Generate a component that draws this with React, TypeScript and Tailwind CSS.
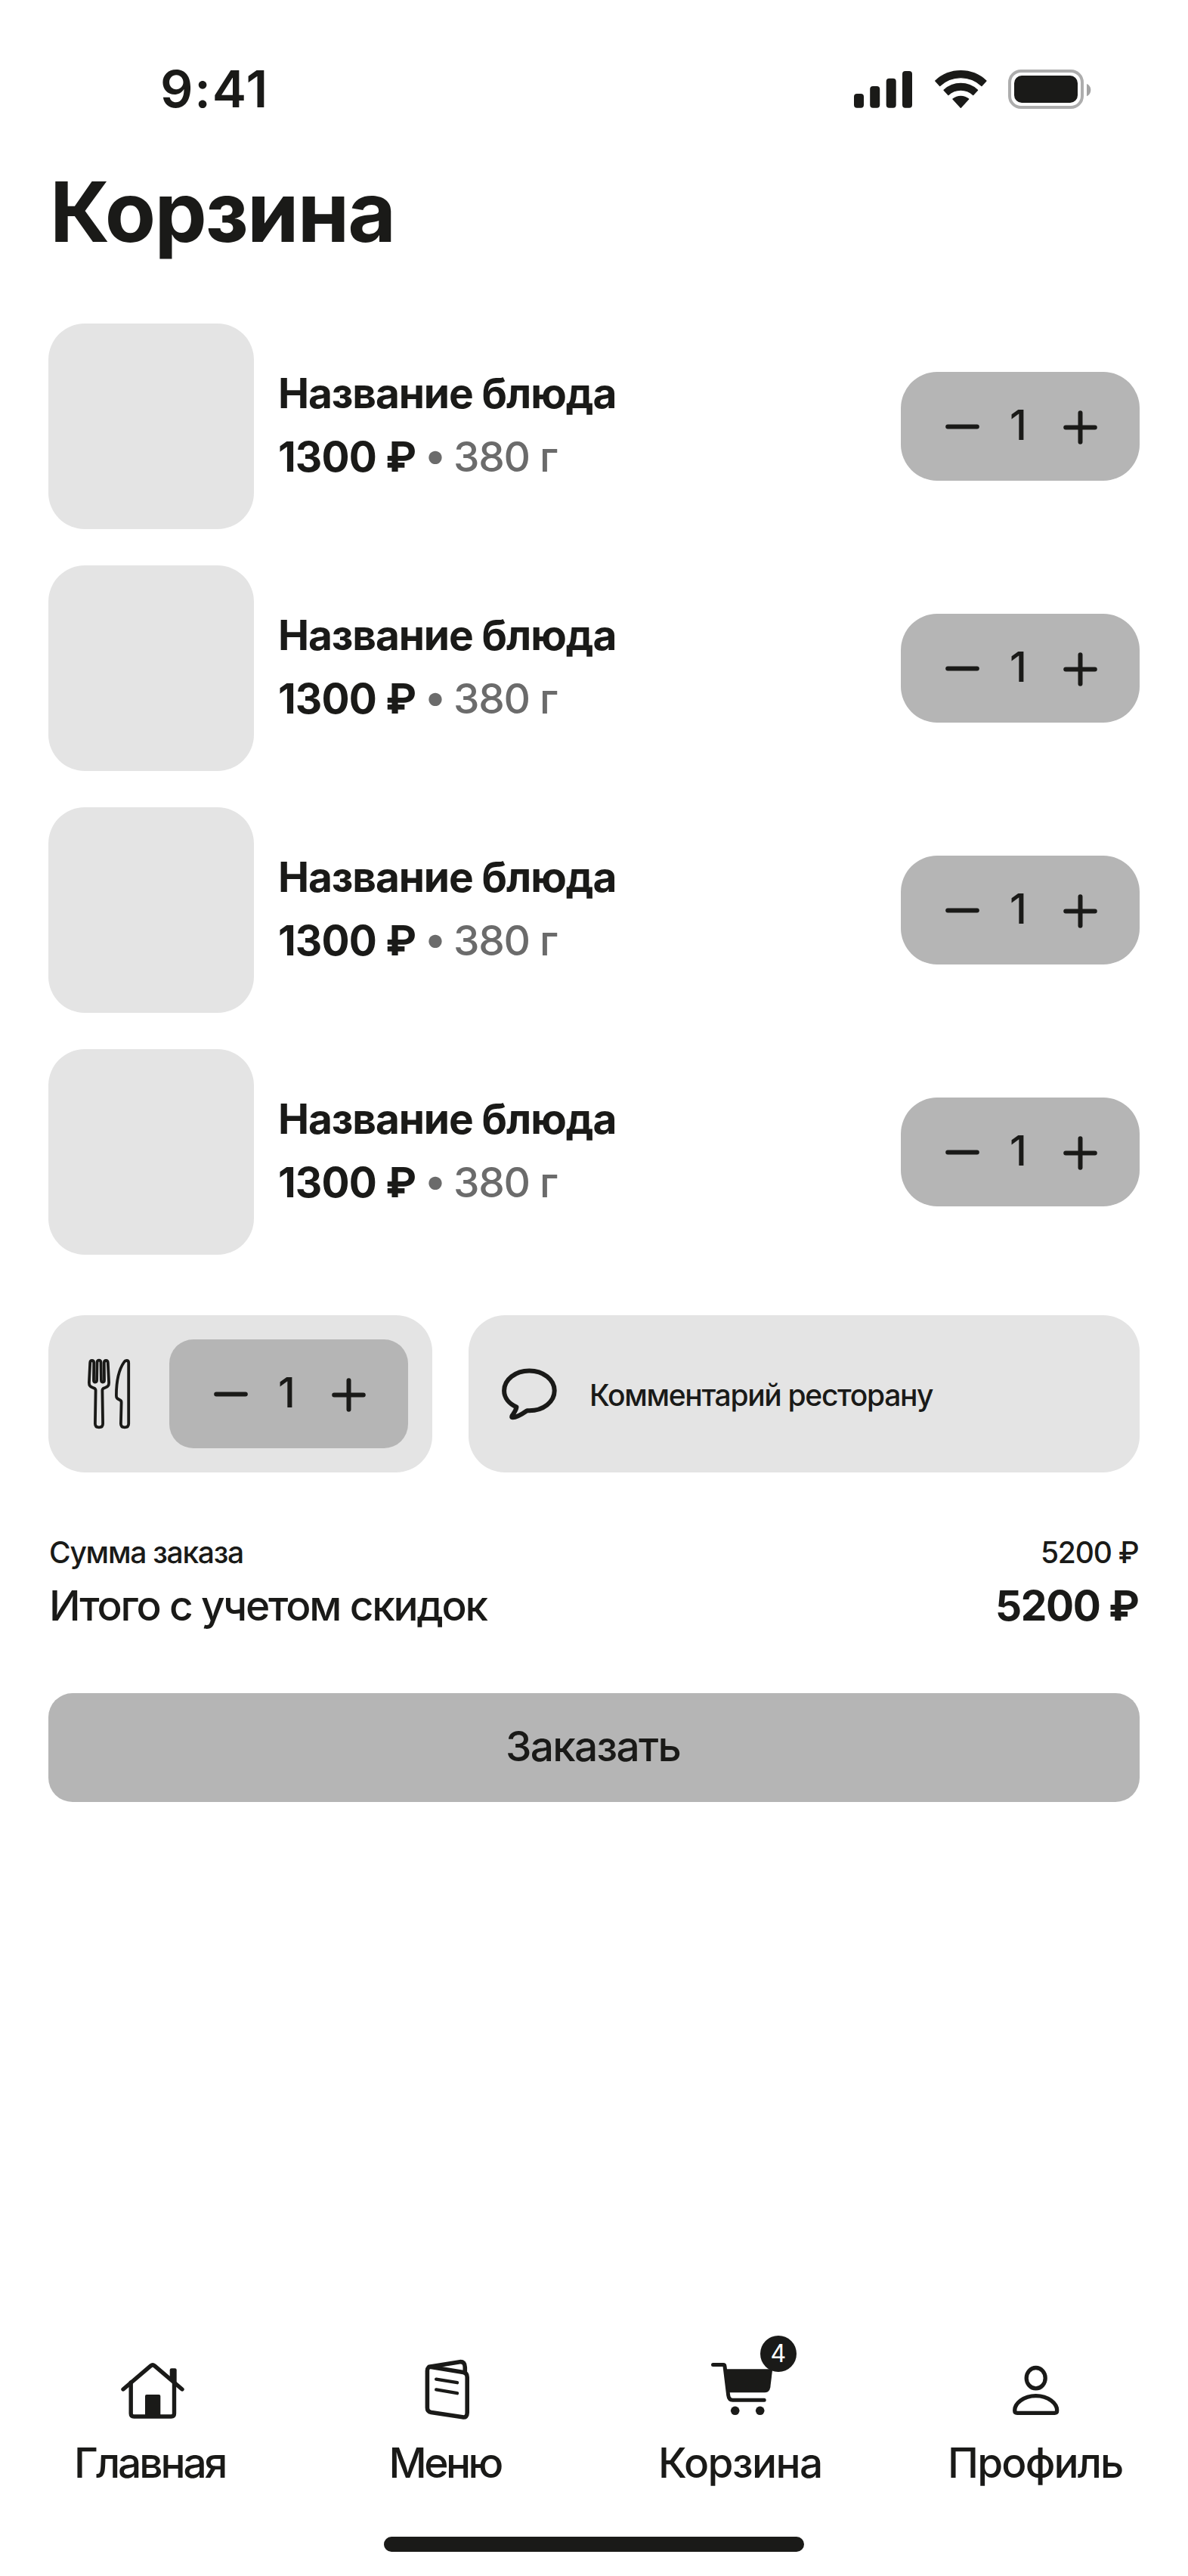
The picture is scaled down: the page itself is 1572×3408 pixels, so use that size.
import React from "react";

type IconProps = { className?: string };

const stroke = {
  fill: "none",
  stroke: "currentColor",
  strokeLinecap: "round" as const,
  strokeLinejoin: "round" as const,
};

function SignalIcon() {
  return (
    <svg className="h-[49px] w-[77px]" viewBox="0 0 77 49" fill="currentColor">
      <rect x="0" y="30" width="13" height="18.8" rx="4" />
      <rect x="21.2" y="20" width="13" height="28.8" rx="4" />
      <rect x="42.7" y="9.8" width="13" height="39" rx="4" />
      <rect x="64" y="0" width="13" height="48.8" rx="4" />
    </svg>
  );
}

function WifiIcon() {
  return (
    <svg className="h-[50px] w-[69px]" viewBox="0 0 69 50" fill="currentColor" stroke="currentColor" strokeWidth="1.4" strokeLinejoin="round">
      <path d="M0.8 14A49.3 49.3 0 0 1 67.9 14L61.9 20.5A40.4 40.4 0 0 0 6.7 20.5Z" />
      <path d="M12.1 26.2A32.6 32.6 0 0 1 56.5 26.2L50.7 32.5A24 24 0 0 0 17.9 32.5Z" />
      <path d="M24 38.1A16.3 16.3 0 0 1 44.6 38.1L34.3 49.2Z" />
    </svg>
  );
}

function BatteryIcon() {
  return (
    <svg className="h-[52px] w-[110px]" viewBox="0 0 110 52">
      <rect x="2" y="2" width="96" height="48" rx="15" fill="none" stroke="#adadad" strokeWidth="4" />
      <rect x="8" y="8" width="84" height="36" rx="10" fill="currentColor" />
      <path d="M104 19C107 20 109.3 23 109.3 27S107 34 104 35.300Z" fill="#a3a3a3" />
    </svg>
  );
}

function MinusIcon() {
  return (
    <svg className="size-[45px]" viewBox="0 0 45 45" {...stroke} strokeWidth="6">
      <path d="M3.200 22.500H41.800" />
    </svg>
  );
}

function PlusIcon({ className }: IconProps) {
  return (
    <svg className={`size-[45px] ${className ?? ""}`} viewBox="0 0 45 45" {...stroke} strokeWidth="6">
      <path d="M3.200 22.500H41.800M22.500 3.200V41.800" />
    </svg>
  );
}

function CutleryIcon() {
  return (
    <svg className="h-[94px] w-[60px]" viewBox="0 0 60 94" {...stroke} strokeWidth="3.800">
      <path d="M3.900 32.300L5.200 5.800Q5.400 3 7.700 3Q10.100 3 10.200 5.800L10 29Q10 31.500 12 31.500Q14 31.500 14.100 29L14.500 5.500Q14.700 2.700 17 2.700Q19.300 2.700 19.500 5.500L19.900 29Q20 31.500 22 31.500Q24 31.500 24 29L23.800 5.800Q23.900 3 26.300 3Q28.600 3 28.800 5.800L30.100 32.300C30.300 37.500 27 38 23.500 39.500Q21.400 40.500 21.400 42.500L22.100 86.500Q22.100 91.300 17 91.300Q11.900 91.300 11.900 86.500L12.600 42.500Q12.600 40.500 10.500 39.500C7 38 3.700 37.500 3.900 32.300Z" />
      <path d="M56.200 6V86.500Q56.200 91.300 51 91.300Q45.900 91.300 45.900 86.500L46.600 58.500Q46.700 56 44.500 55C41.500 53.500 39.800 53 39.900 49C39.900 32 42.500 16 50.200 5Q51.500 3 53.500 3Q56.200 3 56.200 6Z" />
    </svg>
  );
}

function CommentIcon() {
  return (
    <svg className="h-[69px] w-[73px]" viewBox="0 0 73 69" {...stroke} strokeWidth="6">
      <path d="M19.500 51.500C9.300 47 3.100 39 3.100 29.800C3.100 15 18 3.400 36.400 3.400S69.700 15 69.700 29.800S55 56.200 36.400 56.200H33.500C28 60 20.500 65.300 14.500 65.300C12.800 65.300 12.800 64.300 13.700 62.800C16 59.500 18.600 56.500 19.500 51.500Z" />
    </svg>
  );
}

function HomeIcon() {
  return (
    <svg className="size-24" viewBox="0 0 96 96" {...stroke} strokeWidth="5.400">
      <path d="M11 45L47.500 13.900Q50 11.900 52.500 13.900L89 45" />
      <path d="M21.200 36V77Q21.200 81 25.200 81H74.500Q78.500 81 78.500 77V36" />
      <path d="M72.700 30V19.500Q72.700 17.300 75 17.300H79.500Q81.700 17.300 81.700 19.500V37Z" fill="currentColor" stroke="none" />
      <path d="M40 81V54Q40 52 42 52H58.300Q60.300 52 60.300 54V81Z" fill="currentColor" stroke="none" />
    </svg>
  );
}

function MenuIcon() {
  return (
    <svg className="size-24" viewBox="0 0 96 96" {...stroke} strokeWidth="5.600">
      <path d="M22.400 20.500Q22.400 14.800 27.500 15.600L70 22.600Q75.200 23.600 75.200 29V76Q75.200 82.800 69 81.800L27.500 75.500Q22.400 74.600 22.400 69.500Z" />
      <path d="M25 15.300L65.500 8.700Q72.300 8.200 72.300 16V23" />
      <path d="M34.200 31.700L62 36.200M34.200 45.400L62 50.200" strokeWidth="4.400" />
    </svg>
  );
}

function CartIcon() {
  return (
    <svg className="size-24" viewBox="0 0 96 96" {...stroke} strokeWidth="5">
      <path d="M10.500 12.600H24Q25.800 12.600 26 14.500L30.700 53Q31.500 59.300 36.500 59.300H78.200" />
      <path d="M26 18.300H89.200L86.300 42.500Q85.300 49.300 79 49.300H30Z" fill="currentColor" stroke="none" />
      <circle cx="39.700" cy="73.300" r="5.800" fill="currentColor" stroke="none" />
      <circle cx="72.700" cy="73.300" r="5.800" fill="currentColor" stroke="none" />
    </svg>
  );
}

function ProfileIcon() {
  return (
    <svg className="size-24" viewBox="0 0 96 96" {...stroke} strokeWidth="5.300">
      <ellipse cx="46.700" cy="30.200" rx="12.500" ry="13.700" />
      <path d="M22 76.300Q18.700 76.300 18.700 73C18.700 64 30 53.700 46.700 53.700C63.400 53.700 74.700 64 74.700 73Q74.700 76.300 71.400 76.300Z" />
    </svg>
  );
}

function Stepper({ value, className }: { value: number; className: string }) {
  return (
    <div className={`flex h-36 w-[316px] shrink-0 items-center bg-[#b5b5b5] pl-[59px] ${className}`}>
      <button aria-label="Меньше">
        <MinusIcon />
      </button>
      <span className="ml-10 w-6 pb-1 text-[55px] leading-[64px] font-medium">{value}</span>
      <button aria-label="Больше" className="ml-[47px] pt-[3px]">
        <PlusIcon />
      </button>
    </div>
  );
}

function CartItem({ name, price, weight }: { name: string; price: string; weight: string }) {
  return (
    <li className="flex items-center">
      <div className="size-[272px] shrink-0 rounded-[48px] bg-[#e4e4e4]" />
      <div className="ml-8 flex grow flex-col pb-1 text-[55px] leading-[84px]">
        <h2 className="font-bold tracking-[-1.1px]">{name}</h2>
        <p className="flex">
          <span className="w-[183px] font-bold tracking-[-0.85px] whitespace-nowrap">{price}</span>
          <span className="ml-[17px] flex w-4 justify-center pb-1.5 leading-[78px] text-[#6b6b6b]">•</span>
          <span className="ml-4 font-medium tracking-[-1.32px] whitespace-nowrap text-[#6b6b6b]">{weight}</span>
        </p>
      </div>
      <Stepper value={1} className="rounded-[48px]" />
    </li>
  );
}

const items = [1, 2, 3, 4].map((id) => ({ id, name: "Название блюда", price: "1300 ₽", weight: "380 г" }));

const tabs = [
  { label: "Главная", icon: <HomeIcon />, tracking: "tracking-[-3.07px]" },
  { label: "Меню", icon: <MenuIcon />, tracking: "tracking-[-3.53px]" },
  { label: "Корзина", icon: <CartIcon />, tracking: "tracking-[-1.61px]", badge: 4 },
  { label: "Профиль", icon: <ProfileIcon />, tracking: "tracking-[-1.86px]" },
];

export default function App() {
  return (
    <div className="flex h-[3408px] w-[1572px] flex-col bg-white pt-[76px] pb-8 font-['Inter',sans-serif] text-[#1a1a18]">
      <header className="flex h-[84px] items-center justify-between pr-32 pl-[212px]">
        <time className="pb-0.5 text-[68px] leading-[80px] font-semibold tracking-[1.73px]">9:41</time>
        <div className="flex items-center">
          <SignalIcon />
          <div className="mr-7 ml-[30px]">
            <WifiIcon />
          </div>
          <BatteryIcon />
        </div>
      </header>

      <main className="px-16">
        <h1 className="mt-[55px] pl-0.5 text-[110px] leading-[130px] font-bold tracking-[-1.9px]">Корзина</h1>

        <ul className="mt-[83px] flex flex-col gap-12">
          {items.map((item) => (
            <CartItem key={item.id} name={item.name} price={item.price} weight={item.weight} />
          ))}
        </ul>

        <div className="mt-20 flex h-52 gap-12">
          <div className="flex w-[508px] items-center justify-between rounded-[48px] bg-[#e4e4e4] pr-8 pl-[50px]">
            <CutleryIcon />
            <Stepper value={1} className="rounded-[32px]" />
          </div>
          <button className="flex grow items-center gap-[43px] rounded-[48px] bg-[#e4e4e4] pl-11">
            <CommentIcon />
            <span className="pt-[3px] text-[39px] leading-[48px] font-medium tracking-[-1.33px] whitespace-nowrap">Комментарий ресторану</span>
          </button>
        </div>

        <dl className="mt-[82px] flex flex-col gap-3 pr-[1.5px] pl-px">
          <div className="flex justify-between text-[39px] leading-[48px] font-medium">
            <dt className="tracking-[-1.27px]">Сумма заказа</dt>
            <dd className="tracking-[-1.2px]">5200 ₽</dd>
          </div>
          <div className="flex justify-between text-[55px] leading-[68px]">
            <dt className="font-medium tracking-[-2.2px]">Итого с учетом скидок</dt>
            <dd className="font-bold tracking-[-1.4px]">5200 ₽</dd>
          </div>
        </dl>

        <button className="mt-[82px] flex h-36 w-full items-center justify-center rounded-[32px] bg-[#b5b5b5] pr-[3px] pb-1 text-[55px] leading-[64px] font-medium tracking-[-1.7px]">
          Заказать
        </button>
      </main>

      <nav className="mt-auto grid grid-cols-4 px-[5px]">
        {tabs.map((tab) => (
          <a key={tab.label} className="flex flex-col items-center">
            <span className="relative">
              {tab.icon}
              {tab.badge && (
                <span className="absolute -top-[26px] left-[72.500px] flex size-12 items-center justify-center rounded-full bg-[#1a1a18] text-[32px] leading-none text-white">
                  {tab.badge}
                </span>
              )}
            </span>
            <span className={`mt-3.5 pr-1 text-[55px] leading-[64px] font-medium ${tab.tracking}`}>{tab.label}</span>
          </a>
        ))}
      </nav>

      <div className="mt-[66px] h-5 w-[556px] self-center rounded-[10px] bg-[#1a1a18]" />
    </div>
  );
}
